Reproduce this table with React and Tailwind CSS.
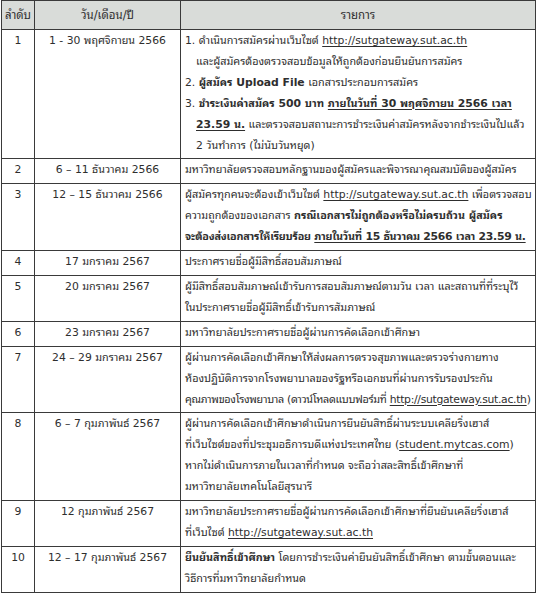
import React from "react";

const U = ({ children }) => <span className="underline underline-offset-2 decoration-1">{children}</span>;
const B = ({ children }) => <span className="font-bold">{children}</span>;

const rows = [
  {
    n: "1",
    d: "1 - 30 พฤศจิกายน 2566",
    lines: [
      <>1. ดำเนินการสมัครผ่านเว็บไซต์ <U>http://sutgateway.sut.ac.th</U></>,
      <span className="pl-[11px]">และผู้สมัครต้องตรวจสอบข้อมูลให้ถูกต้องก่อนยืนยันการสมัคร</span>,
      <>2. <B>ผู้สมัคร Upload File</B> เอกสารประกอบการสมัคร</>,
      <>3. <B>ชำระเงินค่าสมัคร 500 บาท <U>ภายในวันที่ 30 พฤศจิกายน 2566 เวลา</U></B></>,
      <span className="pl-[11px]"><B><U>23.59 น.</U></B> และตรวจสอบสถานะการชำระเงินค่าสมัครหลังจากชำระเงินไปแล้ว</span>,
      <span className="pl-[11px]">2 วันทำการ (ไม่นับวันหยุด)</span>,
    ],
  },
  { n: "2", d: "6 – 11 ธันวาคม 2566", lines: ["มหาวิทยาลัยตรวจสอบหลักฐานของผู้สมัครและพิจารณาคุณสมบัติของผู้สมัคร"] },
  {
    n: "3",
    d: "12 – 15 ธันวาคม 2566",
    lines: [
      <>ผู้สมัครทุกคนจะต้องเข้าเว็บไซต์ <U>http://sutgateway.sut.ac.th</U> เพื่อตรวจสอบ</>,
      <>ความถูกต้องของเอกสาร <B>กรณีเอกสารไม่ถูกต้องหรือไม่ครบถ้วน ผู้สมัคร</B></>,
      <span className="tracking-[-0.25px]"><B>จะต้องส่งเอกสารให้เรียบร้อย <U>ภายในวันที่ 15 ธันวาคม 2566 เวลา 23.59 น.</U></B></span>,
    ],
  },
  { n: "4", d: "17 มกราคม 2567", lines: ["ประกาศรายชื่อผู้มีสิทธิ์สอบสัมภาษณ์"] },
  {
    n: "5",
    d: "20 มกราคม 2567",
    lines: [
      "ผู้มีสิทธิ์สอบสัมภาษณ์เข้ารับการสอบสัมภาษณ์ตามวัน เวลา และสถานที่ที่ระบุไว้",
      "ในประกาศรายชื่อผู้มีสิทธิ์เข้ารับการสัมภาษณ์",
    ],
  },
  { n: "6", d: "23 มกราคม 2567", lines: ["มหาวิทยาลัยประกาศรายชื่อผู้ผ่านการคัดเลือกเข้าศึกษา"] },
  {
    n: "7",
    d: "24 – 29 มกราคม 2567",
    lines: [
      "ผู้ผ่านการคัดเลือกเข้าศึกษาให้ส่งผลการตรวจสุขภาพและตรวจร่างกายทาง",
      "ห้องปฏิบัติการจากโรงพยาบาลของรัฐหรือเอกชนที่ผ่านการรับรองประกัน",
      <span className="tracking-[-0.3px]">คุณภาพของโรงพยาบาล (ดาวน์โหลดแบบฟอร์มที่ <U>http://sutgateway.sut.ac.th</U>)</span>,
    ],
  },
  {
    n: "8",
    d: "6 – 7 กุมภาพันธ์ 2567",
    lines: [
      "ผู้ผ่านการคัดเลือกเข้าศึกษาดำเนินการยืนยันสิทธิ์ผ่านระบบเคลียริ่งเฮาส์",
      <>ที่เว็บไซต์ของที่ประชุมอธิการบดีแห่งประเทศไทย (<U>student.mytcas.com</U>)</>,
      "หากไม่ดำเนินการภายในเวลาที่กำหนด จะถือว่าสละสิทธิ์เข้าศึกษาที่",
      "มหาวิทยาลัยเทคโนโลยีสุรนารี",
    ],
  },
  {
    n: "9",
    d: "12 กุมภาพันธ์ 2567",
    lines: [
      "มหาวิทยาลัยประกาศรายชื่อผู้ผ่านการคัดเลือกเข้าศึกษาที่ยืนยันเคลียริ่งเฮาส์",
      <>ที่เว็บไซต์ <U>http://sutgateway.sut.ac.th</U></>,
    ],
  },
  {
    n: "10",
    d: "12 – 17 กุมภาพันธ์ 2567",
    lines: [
      <><B>ยืนยันสิทธิ์เข้าศึกษา</B> โดยการชำระเงินค่ายืนยันสิทธิ์เข้าศึกษา ตามขั้นตอนและ</>,
      "วิธีการที่มหาวิทยาลัยกำหนด",
    ],
  },
];

export default function App() {
  return (
    <div className="w-[538px] h-[595px] bg-white pl-[1px] text-[#2e2e2e] text-[10.8px] leading-[20.9px] font-['DejaVu_Sans','Noto_Sans_Thai_Looped',sans-serif]">
      <table className="border-collapse w-[534px] table-fixed">
        <colgroup>
          <col className="w-[33px]" />
          <col className="w-[146px]" />
          <col className="w-[355px]" />
        </colgroup>
        <thead>
          <tr className="bg-[#d9dcd9] h-[29px] text-[11.5px]">
            <th className="border border-[#3a3a3a] font-normal text-center px-0">ลำดับ</th>
            <th className="border border-[#3a3a3a] font-normal text-center">วัน/เดือน/ปี</th>
            <th className="border border-[#3a3a3a] font-normal text-center">รายการ</th>
          </tr>
        </thead>
        <tbody>
          {rows.map((r) => (
            <tr key={r.n}>
              <td className="border border-[#3a3a3a] text-center align-top pt-[1px] pb-[2px]">{r.n}</td>
              <td className="border border-[#3a3a3a] text-center align-top pt-[1px] pb-[2px] whitespace-nowrap">{r.d}</td>
              <td className="border border-[#3a3a3a] align-top pl-[4px] pr-0 pt-[1px] pb-[2px] whitespace-nowrap overflow-hidden">
                {r.lines.map((l, i) => (
                  <div key={i}>{l}</div>
                ))}
              </td>
            </tr>
          ))}
        </tbody>
      </table>
    </div>
  );
}
